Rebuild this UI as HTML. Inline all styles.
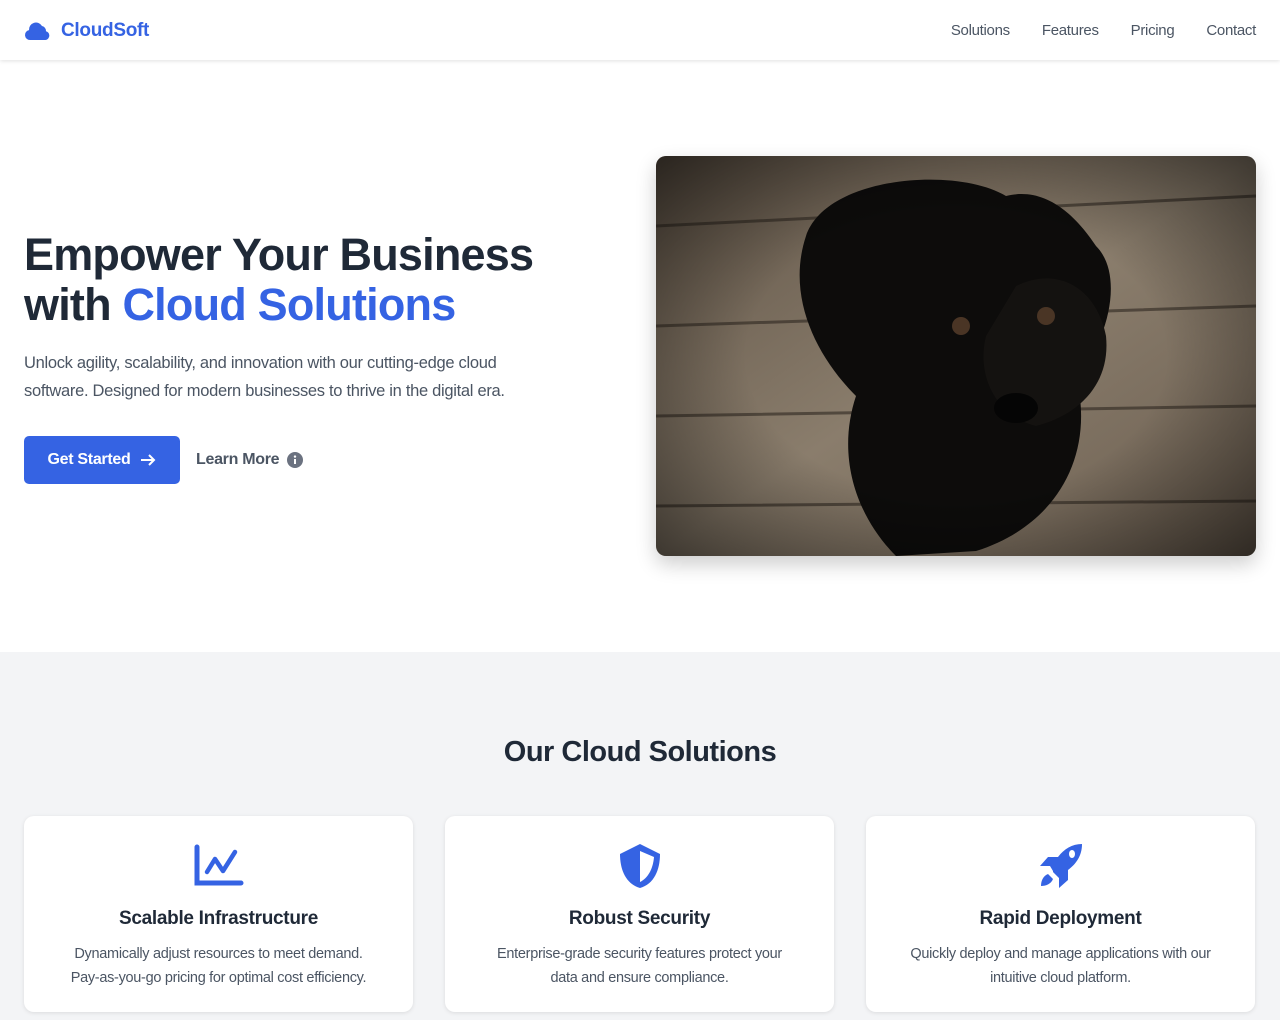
<!DOCTYPE html>
<html><head><meta charset="utf-8"><style>
*{box-sizing:border-box;margin:0;padding:0}
body{width:1280px;height:1020px;overflow:hidden;font-family:"Liberation Sans",sans-serif;background:#fff;color:#1f2937}
header{height:60px;display:flex;align-items:center;justify-content:space-between;padding:0 24px;box-shadow:0 1px 4px rgba(0,0,0,.12);position:relative;z-index:2;background:#fff}
.logo{display:flex;align-items:center;gap:10px;color:#3563e3;font-weight:bold;font-size:19px;letter-spacing:-0.3px;margin-top:2px}
nav a{color:#4b5563;text-decoration:none;font-size:15px;margin-left:32px;letter-spacing:-0.3px}
nav{margin-top:2px}
.hero{height:592px;position:relative}
h1{position:absolute;left:24px;top:170px;font-size:45px;line-height:50px;font-weight:bold;color:#1f2937;letter-spacing:-0.8px}
h1 span{color:#3563e3}
.lead{position:absolute;left:24px;top:348px;font-size:16.5px;line-height:28px;color:#4b5563;width:545px;letter-spacing:-0.3px}
.lead{top:289px}
.btn{position:absolute;left:24px;top:376px;width:156px;height:48px;background:#3563e3;color:#fff;border-radius:5px;font-weight:bold;font-size:16px;display:flex;align-items:center;justify-content:center;gap:10px;letter-spacing:-0.3px}
.lm{position:absolute;left:196px;top:391px;color:#4b5563;font-weight:bold;font-size:16px;display:flex;align-items:center;gap:8px;letter-spacing:-0.3px}
.img{position:absolute;left:656px;top:96px;width:600px;height:400px;border-radius:10px;overflow:hidden;box-shadow:0 8px 20px rgba(0,0,0,.2)}
.sec{background:#f3f4f6;height:368px;position:relative}
h2{position:absolute;top:84px;width:100%;text-align:center;font-size:29px;font-weight:bold;color:#1f2937;letter-spacing:-0.5px}
.card{position:absolute;top:164px;width:389px;height:196px;background:#fff;border-radius:10px;box-shadow:0 1px 4px rgba(0,0,0,.1);text-align:center}
.card .ic{height:48px;margin-top:26px;display:flex;justify-content:center;align-items:center}
.card h3{font-size:19px;font-weight:bold;margin-top:18px;color:#1f2937;letter-spacing:-0.3px}
.card p{font-size:14.5px;line-height:24px;color:#4b5563;margin-top:12px;padding:0 10px;letter-spacing:-0.3px;white-space:nowrap}
</style></head><body>
<header>
<div class="logo"><svg width="27" height="20" viewBox="0 0 27 20"><path d="M6 19a5 5 0 0 1-1-9.9A7 7 0 0 1 18 5a5 5 0 0 1 4 5.2A4.5 4.5 0 0 1 21.5 19z" fill="#3563e3"/></svg>CloudSoft</div>
<nav><a>Solutions</a><a>Features</a><a>Pricing</a><a>Contact</a></nav>
</header>
<div class="hero">
<h1>Empower Your Business<br>with <span>Cloud Solutions</span></h1>
<p class="lead">Unlock agility, scalability, and innovation with our cutting-edge cloud<br>software. Designed for modern businesses to thrive in the digital era.</p>
<div class="btn">Get Started <svg width="16" height="14" viewBox="0 0 16 14"><path d="M1 7h13M9 2l5 5-5 5" stroke="#fff" stroke-width="2" fill="none"/></svg></div>
<div class="lm">Learn More <svg width="16" height="16" viewBox="0 0 16 16"><circle cx="8" cy="8" r="8" fill="#6b7280"/><rect x="7" y="7" width="2" height="5" fill="#fff"/><circle cx="8" cy="4.6" r="1.2" fill="#fff"/></svg></div>
<div class="img"><svg width="600" height="400" viewBox="0 0 600 400">
<defs><linearGradient id="w" x1="0" y1="0" x2="1" y2="1"><stop offset="0" stop-color="#5f5346"/><stop offset=".5" stop-color="#8a7d6c"/><stop offset="1" stop-color="#6b5e50"/></linearGradient>
<radialGradient id="v" cx=".5" cy=".5" r=".7"><stop offset=".5" stop-color="#000" stop-opacity="0"/><stop offset="1" stop-color="#000" stop-opacity=".55"/></radialGradient></defs>
<rect width="600" height="400" fill="url(#w)"/>
<g stroke="#2e2720" stroke-width="3" opacity=".6"><path d="M0 70 L600 40M0 170 L600 150M0 260 L600 250M0 350 L600 345"/></g>
<path d="M150 80 C170 20 300 10 350 40 C390 30 420 60 440 90 C470 120 450 190 420 220 C440 300 400 370 320 395 L240 400 C200 360 180 300 200 240 C160 200 130 140 150 80z" fill="#0d0c0b"/>
<path d="M360 130 C400 110 440 130 450 180 C455 230 420 260 380 270 C340 260 320 220 330 180z" fill="#141210"/>
<circle cx="305" cy="170" r="9" fill="#4a3525"/><circle cx="390" cy="160" r="9" fill="#4a3525"/>
<ellipse cx="360" cy="252" rx="22" ry="15" fill="#050505"/>
<rect width="600" height="400" fill="url(#v)"/>
</svg></div>
</div>
<div class="sec">
<h2>Our Cloud Solutions</h2>
<div class="card" style="left:24px"><div class="ic"><svg width="50" height="44" viewBox="0 0 50 44"><path d="M3 3v36h44" stroke="#3563e3" stroke-width="5" fill="none" stroke-linecap="round"/><path d="M13 28l8-13 8 12 12-19" stroke="#3563e3" stroke-width="4.5" fill="none" stroke-linecap="round" stroke-linejoin="round"/></svg></div><h3>Scalable Infrastructure</h3><p>Dynamically adjust resources to meet demand.<br>Pay-as-you-go pricing for optimal cost efficiency.</p></div>
<div class="card" style="left:445px"><div class="ic"><svg width="46" height="48" viewBox="0 0 46 48"><path d="M23 2L3 12c0 16 6 30 20 34 14-4 20-18 20-34z" fill="#3563e3"/><path d="M23 9v31c8-4 13-13 14-25z" fill="#fff"/></svg></div><h3>Robust Security</h3><p>Enterprise-grade security features protect your<br>data and ensure compliance.</p></div>
<div class="card" style="left:866px"><div class="ic"><svg width="50" height="48" viewBox="0 0 50 48"><path d="M46 2c-10 0-18 5-24 13H12L4 24h10l3 5v1l6 6v10l9-8V28c8-6 14-14 14-26z" fill="#3563e3"/><ellipse cx="36" cy="12" rx="3" ry="4" fill="#fff"/><path d="M12 32c-5 2-7 7-7 12 5 0 10-2 12-7z" fill="#3563e3"/></svg></div><h3>Rapid Deployment</h3><p>Quickly deploy and manage applications with our<br>intuitive cloud platform.</p></div>
</div>
</body></html>
